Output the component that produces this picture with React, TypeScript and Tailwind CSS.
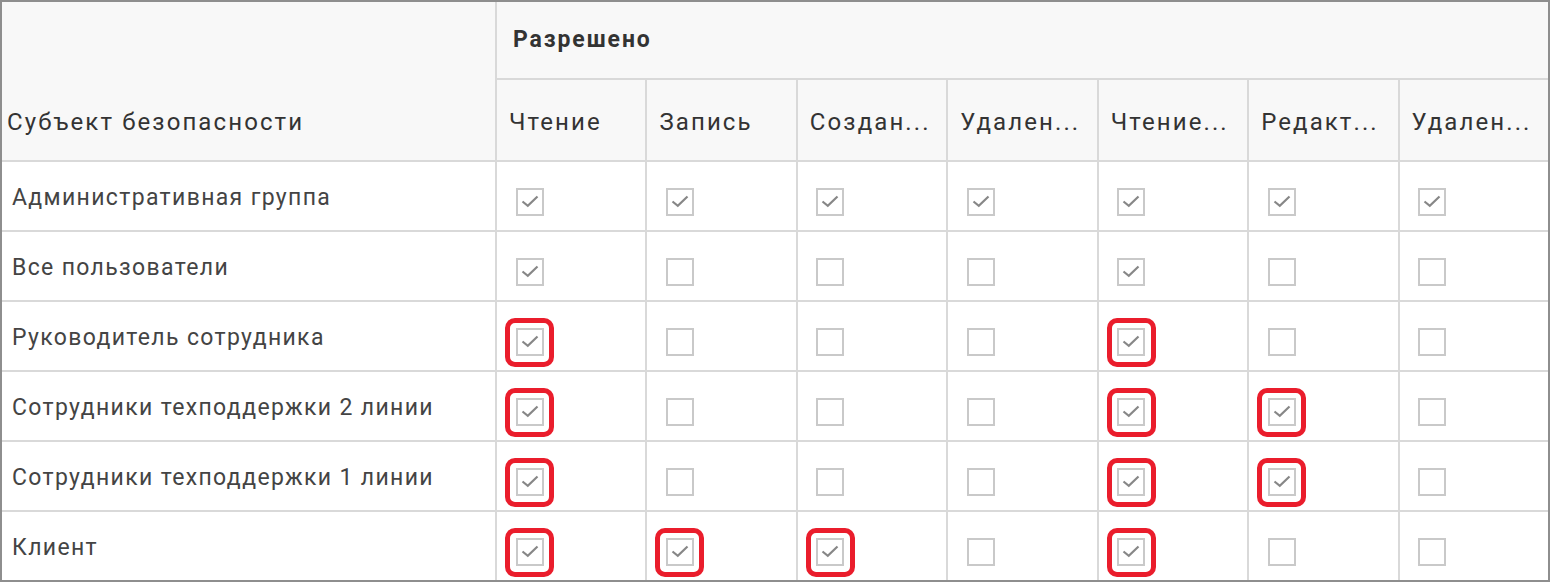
import React from 'react';

// Column headers for the "Разрешено" group (as shown, cut by the column width)
const columns = ['Чтение', 'Запись', 'Создан...', 'Удален...', 'Чтение...', 'Редакт...', 'Удален...'];

// 0 = off, 1 = on, 2 = on + highlighted
interface Row {
  name: string;
  cells: number[];
}

const rows: Row[] = [
  { name: 'Административная группа', cells: [1, 1, 1, 1, 1, 1, 1] },
  { name: 'Все пользователи', cells: [1, 0, 0, 0, 1, 0, 0] },
  { name: 'Руководитель сотрудника', cells: [2, 0, 0, 0, 2, 0, 0] },
  { name: 'Сотрудники техподдержки 2 линии', cells: [2, 0, 0, 0, 2, 2, 0] },
  { name: 'Сотрудники техподдержки 1 линии', cells: [2, 0, 0, 0, 2, 2, 0] },
  { name: 'Клиент', cells: [2, 2, 2, 0, 2, 0, 0] },
];

const CheckBox: React.FC<{ value: number }> = ({ value }) => (
  <div
    className={
      value === 2
        ? 'w-[49px] h-[49px] border-[5px] border-[#ea1d2c] rounded-[10px] flex items-center justify-center'
        : 'w-[49px] h-[49px] border-[5px] border-transparent flex items-center justify-center'
    }
  >
    <div className="w-[28px] h-[28px] border-2 border-[#c9c9c9] bg-white flex items-center justify-center">
      {value > 0 && (
        <svg width="24" height="24" viewBox="0 0 24 24">
          <path d="M4.5 11.5 L9.8 15.8 L19.5 6.5" fill="none" stroke="#878787" strokeWidth="2.2" />
        </svg>
      )}
    </div>
  </div>
);

export default function App() {
  return (
    <div
      className="w-[1550px] h-[582px] border-2 border-[#8e8e8e] bg-white"
      style={{ fontFamily: 'Roboto, "Noto Sans", sans-serif' }}
    >
      <div className="grid grid-cols-[493px_repeat(7,1fr)] grid-rows-[76px_80px_repeat(6,68px)] gap-[2px] bg-[#d9d9d9] h-full">
        <div className="row-span-2 bg-[#f8f8f8] flex items-end">
          <div className="h-[80px] flex items-center pl-[5px] pt-1 text-[24px] tracking-[2.1px] text-[#333]">
            Субъект безопасности
          </div>
        </div>
        <div className="col-span-7 bg-[#f8f8f8] flex items-center pl-4 text-[23px] tracking-[1.9px] font-bold text-[#333]">
          Разрешено
        </div>
        {columns.map((c, i) => (
          <div
            key={i}
            className="bg-[#f8f8f8] flex items-center pl-[12px] pt-1 text-[24px] tracking-[2.1px] text-[#333] min-w-0 whitespace-nowrap overflow-hidden"
          >
            {c}
          </div>
        ))}
        {rows.map((r, i) => (
          <React.Fragment key={i}>
            <div className="bg-white flex items-center pl-[10px] pt-1 text-[23px] tracking-[1.35px] text-[#444]">
              {r.name}
            </div>
            {r.cells.map((v, j) => (
              <div key={j} className="bg-white flex items-center pl-2 pt-3">
                <CheckBox value={v} />
              </div>
            ))}
          </React.Fragment>
        ))}
      </div>
    </div>
  );
}
